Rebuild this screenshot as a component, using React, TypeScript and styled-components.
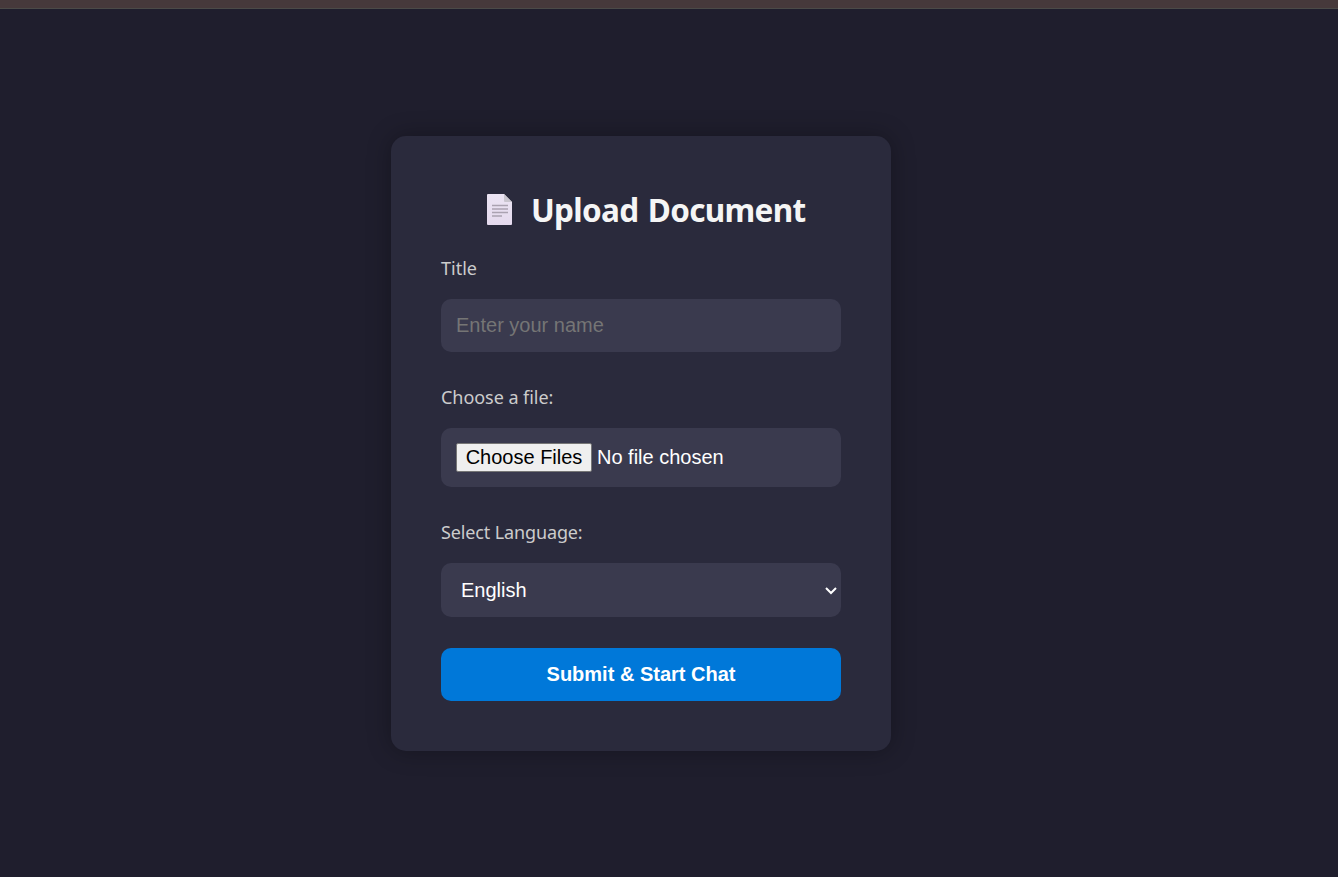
import React, { useRef, useState } from "react";
import styled, { createGlobalStyle } from "styled-components";

const GlobalStyle = createGlobalStyle`
  *, *::before, *::after { box-sizing: border-box; }
  body {
    margin: 0;
    background: #1f1e2d;
    font-family: "Segoe UI", "Noto Sans", "Open Sans", sans-serif;
  }
`;

const Page = styled.div`
  display: flex;
  flex-direction: column;
  height: 100vh;
  overflow: hidden;
`;

const TopStrip = styled.div`
  flex: none;
  height: 9px;
  background: #46393b;
  border-bottom: 1px solid #4b4a48;
`;

const Main = styled.main`
  flex: 1;
  display: flex;
  justify-content: center;
  align-items: flex-start;
  padding: 127px 56px 0 0;
`;

const Card = styled.form`
  display: flex;
  flex-direction: column;
  width: 500px;
  height: 615px;
  padding: 50px;
  border-radius: 15px;
  background: #2a2a3c;
  box-shadow: 0 0 25px rgba(0, 0, 0, 0.3);
`;

const Heading = styled.h2`
  display: flex;
  align-items: center;
  height: 47px;
  margin: 0 0 23px;
  padding-left: 46px;
  gap: 19px;
  color: #f5f5f5;
  font-size: 31.5px;
  font-weight: 700;
  line-height: 47px;
  white-space: nowrap;
`;

const HeadingText = styled.span`
  letter-spacing: -0.7px;
  word-spacing: 2px;
`;

const Field = styled.div<{ $gap: number }>`
  display: flex;
  flex-direction: column;
  margin-bottom: ${(p) => p.$gap}px;
`;

const Label = styled.label<{ $tracking?: number }>`
  height: 24px;
  margin-bottom: 19px;
  color: #cccccc;
  font-size: 18px;
  line-height: 24px;
  letter-spacing: ${(p) => p.$tracking ?? 0}px;
  align-self: flex-start;
  white-space: nowrap;
`;

const controlFont = `
  font-family: Arial, "Liberation Sans", sans-serif;
  font-size: 20px;
`;

const TextInput = styled.input`
  ${controlFont}
  width: 100%;
  height: 53px;
  padding: 0 15px;
  border: 0;
  border-radius: 10px;
  outline: none;
  background: #3a3a4e;
  color: #ffffff;
  &::placeholder { color: #757575; opacity: 1; }
`;

const FileBox = styled.div`
  ${controlFont}
  display: flex;
  align-items: center;
  gap: 5px;
  height: 59px;
  padding: 0 15px;
  border-radius: 10px;
  background: #3a3a4e;
  color: #ffffff;
`;

const FileButton = styled.button`
  ${controlFont}
  width: 136px;
  height: 29px;
  padding: 0 0 1px;
  border: 1px solid #767676;
  border-radius: 2px;
  background: #efefef;
  color: #000000;
  line-height: 26px;
  white-space: nowrap;
`;

const FileStatus = styled.span`
  line-height: 26px;
  padding-bottom: 1px;
`;

const SelectBox = styled.div`
  position: relative;
  height: 54px;
`;

const Select = styled.select`
  ${controlFont}
  appearance: none;
  width: 100%;
  height: 54px;
  padding: 0 20px;
  border: 0;
  border-radius: 10px;
  outline: none;
  background: #3a3a4e;
  color: #ffffff;
`;

const Chevron = styled.svg`
  position: absolute;
  top: 23px;
  right: 4px;
  pointer-events: none;
`;

const Submit = styled.button`
  ${controlFont}
  height: 53px;
  padding: 0;
  border: 0;
  border-radius: 10px;
  background: #0078d9;
  color: #ffffff;
  font-weight: 700;
  cursor: pointer;
`;

function DocumentIcon() {
  return (
    <svg width="25" height="31" viewBox="0 0 25 31" aria-hidden="true">
      <defs>
        <linearGradient id="paper" x1="0" y1="0" x2="0" y2="1">
          <stop offset="0" stopColor="#ebe4f3" />
          <stop offset="1" stopColor="#e5daee" />
        </linearGradient>
      </defs>
      <path d="M1 0H17L25 8V30Q25 31 24 31H1Q0 31 0 30V1Q0 0 1 0Z" fill="url(#paper)" />
      <path d="M17 0L25 8H18Q17 8 17 7Z" fill="#c9c5ce" />
      <path d="M5 11.5H21M5 15H21M5 18.5H21M5 22H15" stroke="#aaa2b1" strokeWidth="1.3" />
    </svg>
  );
}

export default function App() {
  const picker = useRef<HTMLInputElement>(null);
  const [status, setStatus] = useState("No file chosen");

  const onPick = (e: React.ChangeEvent<HTMLInputElement>) => {
    const files = e.target.files;
    if (!files || files.length === 0) setStatus("No file chosen");
    else setStatus(files.length === 1 ? files[0].name : `${files.length} files`);
  };

  return (
    <>
      <GlobalStyle />
      <Page>
        <TopStrip />
        <Main>
          <Card onSubmit={(e) => e.preventDefault()}>
            <Heading>
              <DocumentIcon />
              <HeadingText>Upload Document</HeadingText>
            </Heading>
            <Field $gap={33}>
              <Label htmlFor="title">Title</Label>
              <TextInput id="title" placeholder="Enter your name" />
            </Field>
            <Field $gap={33}>
              <Label htmlFor="pick" $tracking={-0.05}>Choose a file:</Label>
              <FileBox>
                <FileButton id="pick" type="button" onClick={() => picker.current?.click()}>
                  Choose Files
                </FileButton>
                <FileStatus>{status}</FileStatus>
                <input ref={picker} type="file" multiple hidden onChange={onPick} />
              </FileBox>
            </Field>
            <Field $gap={31}>
              <Label htmlFor="language" $tracking={-0.13}>Select Language:</Label>
              <SelectBox>
                <Select id="language" defaultValue="English">
                  <option>English</option>
                </Select>
                <Chevron width="12" height="9" viewBox="0 0 12 9">
                  <path d="M1 2L6 7L11 2" fill="none" stroke="#ffffff" strokeWidth="2" />
                </Chevron>
              </SelectBox>
            </Field>
            <Submit type="submit">Submit &amp; Start Chat</Submit>
          </Card>
        </Main>
      </Page>
    </>
  );
}
